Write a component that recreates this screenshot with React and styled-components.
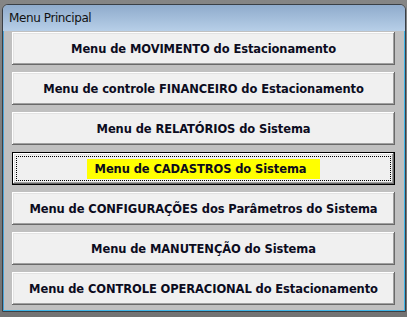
import React from 'react';
import styled, { createGlobalStyle } from 'styled-components';

const menuItems = [
  'Menu de MOVIMENTO do Estacionamento',
  'Menu de controle FINANCEIRO do Estacionamento',
  'Menu de RELATÓRIOS do Sistema',
  'Menu de CADASTROS do Sistema',
  'Menu de CONFIGURAÇÕES dos Parâmetros do Sistema',
  'Menu de MANUTENÇÃO do Sistema',
  'Menu de CONTROLE OPERACIONAL do Estacionamento',
];

const FOCUSED_INDEX = 3;

const GlobalStyle = createGlobalStyle`
  html, body {
    margin: 0;
    padding: 0;
    background: #7a7a7a;
  }
`;

const Desktop = styled('div')`
  width: 407px;
  height: 317px;
  box-sizing: border-box;
  padding: 4px 1px 0 2px;
  background: linear-gradient(#858585, #737373);
  overflow: hidden;
`;

const Window = styled('div')`
  display: flex;
  flex-direction: column;
  height: 308px;
  box-sizing: border-box;
  border: 1px solid #3a3f45;
  border-radius: 6px 6px 0 0;
  overflow: hidden;
  background: #c0c0c0;
`;

const TitleBar = styled('div')`
  height: 26px;
  flex: none;
  display: flex;
  align-items: center;
  padding-left: 6px;
  background: linear-gradient(#8fabcc, #b7cfe8);
  font-family: "DejaVu Sans", Tahoma, sans-serif;
  font-size: 12px;
  color: #111;
  letter-spacing: -0.4px;
`;

const Content = styled('div')`
  flex: 1;
  display: flex;
  flex-direction: column;
  gap: 7px;
  padding: 1px 9px 4px 8px;
  background: #c0c0c0;
  border-left: 1px solid #4aa3d8;
  border-right: 1px solid #3fb4e6;
  border-bottom: 1px solid #3fb4e6;
`;

const MenuButton = styled('button')`
  position: relative;
  height: 33px;
  flex: none;
  display: flex;
  align-items: center;
  justify-content: center;
  margin: 0;
  padding: 0;
  background: #f0f0f0;
  border: ${({ $focused }) => ($focused ? '1px solid #000' : 'none')};
  box-shadow: inset -1px -1px #696969, inset 1px 1px #ffffff,
    inset -2px -2px #a0a0a0, inset 2px 2px #e3e3e3;
  font-family: "DejaVu Sans", Tahoma, sans-serif;
  font-weight: bold;
  font-size: 11.5px;
  color: #0c0c1e;
  letter-spacing: -0.1px;
  cursor: pointer;
`;

const FocusRing = styled('span')`
  position: absolute;
  inset: 3px;
  border: 1px dotted #000;
  pointer-events: none;
`;

const Highlight = styled('span')`
  background: ${({ $on }) => ($on ? '#ffff00' : 'transparent')};
  padding: ${({ $on }) => ($on ? '3px 14px 3px 8px' : '0')};
`;

export default function App () {
  return (
    <>
      <GlobalStyle />
      <Desktop>
        <Window>
          <TitleBar>Menu Principal</TitleBar>
          <Content>
            {menuItems.map((label, index) => {
              const focused = index === FOCUSED_INDEX;
              return (
                <MenuButton key={label} $focused={focused}>
                  {focused && <FocusRing />}
                  <Highlight $on={focused}>{label}</Highlight>
                </MenuButton>
              );
            })}
          </Content>
        </Window>
      </Desktop>
    </>
  );
}
